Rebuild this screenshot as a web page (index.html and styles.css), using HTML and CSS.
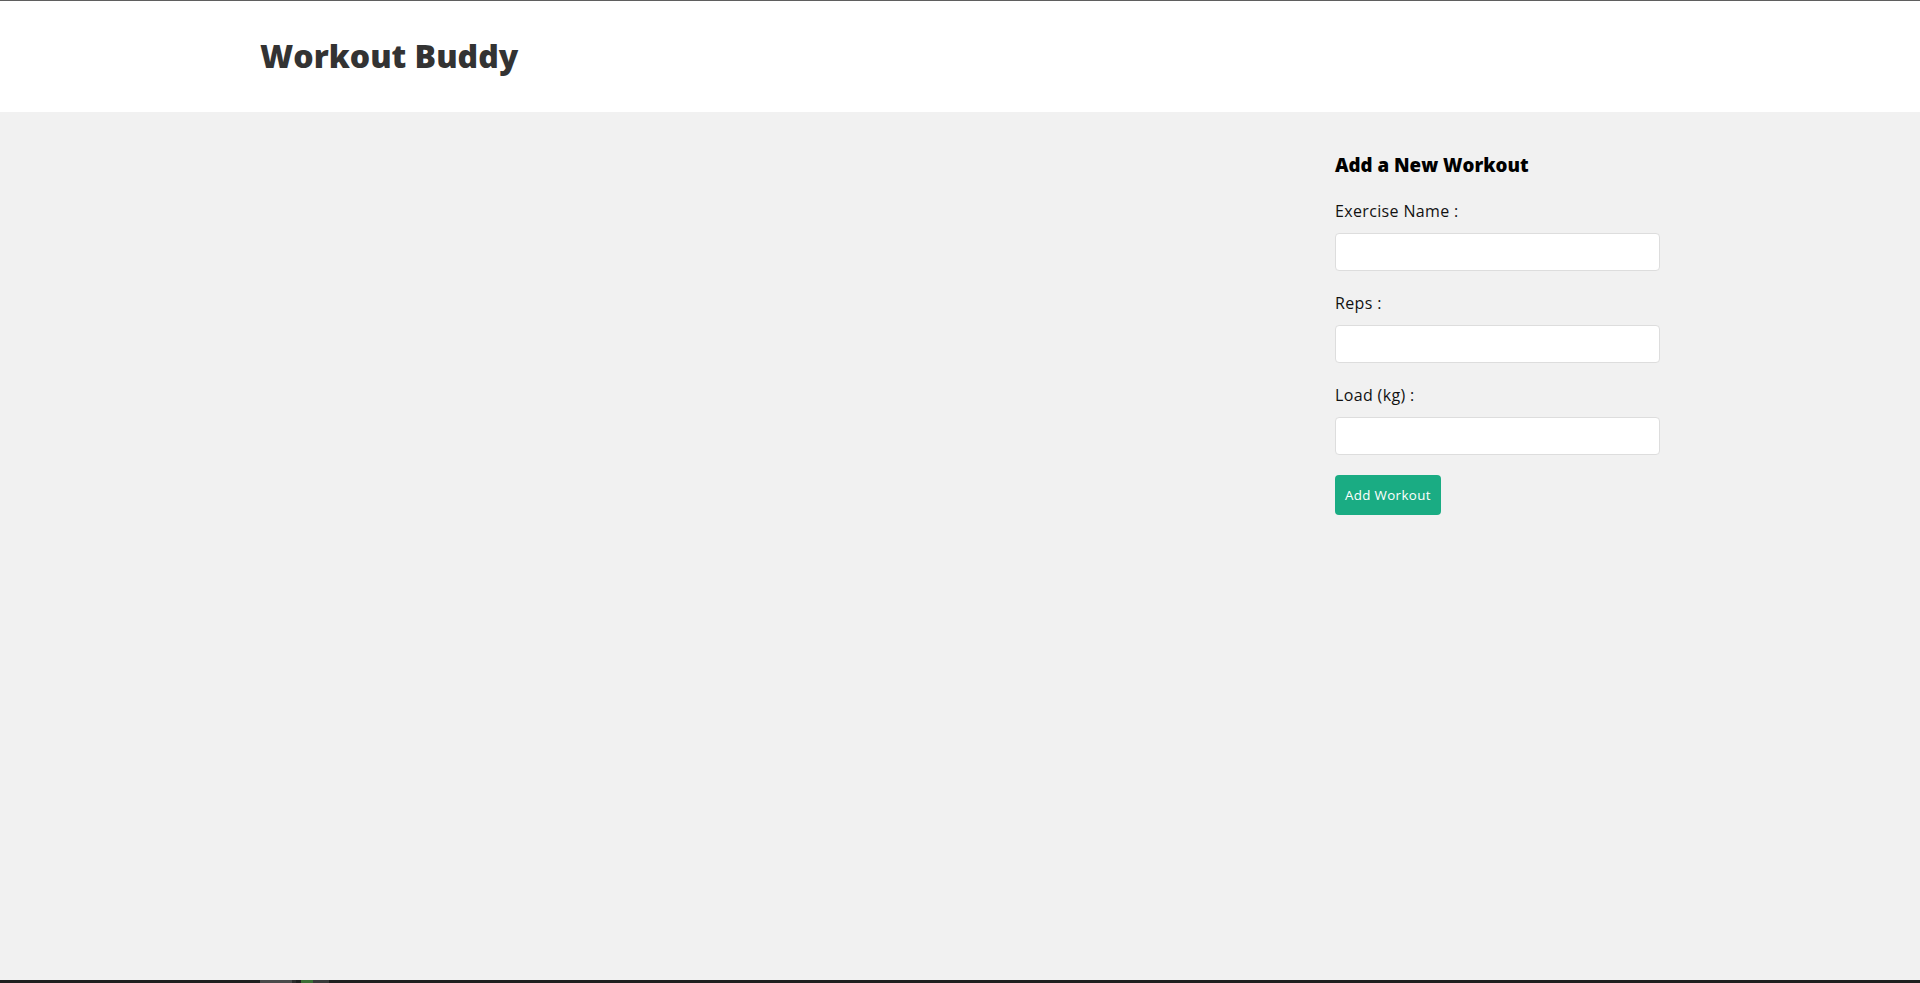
FILE: index.html
```html
<!DOCTYPE html>
<html lang="en">
<head>
<meta charset="utf-8">
<title>Workout Buddy</title>
<link rel="stylesheet" href="styles.css">
</head>
<body>
<div class="app">
  <header class="site-header">
    <div class="container">
      <a class="brand" href="#"><h1>Workout Buddy</h1></a>
    </div>
  </header>
  <main class="pages">
    <div class="home">
      <div class="workouts"></div>
      <form class="create">
        <h3>Add a New Workout</h3>
        <label>Exercise Name :</label>
        <input type="text">
        <label>Reps :</label>
        <input type="number">
        <label>Load (kg) :</label>
        <input type="number">
        <button type="button">Add Workout</button>
      </form>
    </div>
  </main>
</div>
<div class="taskbar">
  <span class="tb-gap1"></span>
  <span class="tb-a"></span>
  <span class="tb-b"></span>
  <span class="tb-gap2"></span>
  <span class="tb-c"></span>
  <span class="tb-d"></span>
</div>
</body>
</html>
```
FILE: styles.css
```css
html, body {
  margin: 0;
  height: 100%;
}
body {
  background: #f1f1f1;
  font-family: "Open Sans", "Liberation Sans", sans-serif;
  border-top: 1px solid #5f5f5f;
  box-sizing: border-box;
  display: flex;
  flex-direction: column;
}
.app {
  flex: 1;
}
.site-header {
  background: #fff;
}
.container {
  max-width: 1400px;
  margin: 0 auto;
  padding: 10px 20px;
  display: flex;
  align-items: center;
  justify-content: space-between;
}
.brand {
  color: #333;
  text-decoration: none;
}
.brand h1 {
  font-size: 32px;
  line-height: 48px;
  margin: 21.44px 0;
  font-weight: 800;
  letter-spacing: 0;
}
.pages {
  max-width: 1400px;
  padding: 20px;
  margin: 0 auto;
}
.home {
  display: grid;
  grid-template-columns: 3fr 1fr;
  gap: 100px;
}
.create h3 {
  font-size: 18.72px;
  line-height: 28px;
  margin: 18.72px 0 20.72px;
  font-weight: 800;
  color: #000;
}
.create label {
  display: block;
  font-size: 16px;
  line-height: 24px;
  color: #111;
  letter-spacing: 0.35px;
}
.create input {
  display: block;
  box-sizing: border-box;
  width: 100%;
  height: 38px;
  padding: 10px;
  margin-top: 10px;
  margin-bottom: 20px;
  border: 1px solid #ddd;
  border-radius: 4px;
  background: #fff;
  font-family: inherit;
}
.create button {
  background: #1aac83;
  border: 0;
  color: #fff;
  padding: 10px;
  height: 40px;
  font-family: inherit;
  font-size: 13.33px;
  line-height: 20px;
  letter-spacing: 0.35px;
  border-radius: 4px;
  cursor: pointer;
}
.taskbar {
  height: 3px;
  background: #1e1e1e;
  display: flex;
  flex: none;
}
.tb-gap1 { width: 260px; }
.tb-a { width: 32px; background: #4a4a4a; }
.tb-b { width: 4px; background: #2c2c2c; }
.tb-gap2 { width: 5px; }
.tb-c { width: 12px; background: #3b6e35; }
.tb-d { width: 16px; background: #3a3a3a; }
```
